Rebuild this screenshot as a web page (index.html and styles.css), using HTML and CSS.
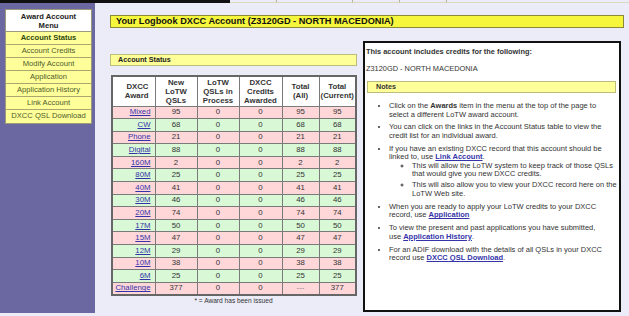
FILE: index.html
```html
<!DOCTYPE html>
<html lang="en">
  <head>
    <meta charset="UTF-8" />
    <meta name="viewport" content="width=device-width, initial-scale=1.0" />
    <title>DXCC Account</title>

    <link rel="stylesheet" href="styles.css">
  </head>
  <body>
    <div class="topbar">
      <div class="topbar-dark"></div>
      <div class="topbar-tab"></div>
      <div class="topbar-tab wide"></div>
      <div class="topbar-tab"></div>
      <div class="topbar-tab"></div>
      <div class="topbar-rest"></div>
    </div>

    <div class="page">
      <div class="sidebar">
        <div class="menu">
          <div class="menu-head">Award Account<br />Menu</div>
          <div class="menu-item current">Account Status</div>
          <div class="menu-item">Account Credits</div>
          <div class="menu-item">Modify Account</div>
          <div class="menu-item">Application</div>
          <div class="menu-item">Application History</div>
          <div class="menu-item">Link Account</div>
          <div class="menu-item">DXCC QSL Download</div>
        </div>
      </div>

      <div class="main">
        <h1 class="title">Your Logbook DXCC Account (Z3120GD - NORTH MACEDONIA)</h1>

        <div class="content">
          <div class="status">
            <div class="bar">Account Status</div>

            <table class="status-table">
              <thead>
                <tr>
                  <th class="award">DXCC<br />Award</th>
                  <th>New<br />LoTW<br />QSLs</th>
                  <th>LoTW<br />QSLs in<br />Process</th>
                  <th>DXCC<br />Credits<br />Awarded</th>
                  <th>Total<br />(All)</th>
                  <th>Total<br />(Current)</th>
                </tr>
              </thead>
              <tbody>
                <tr class="pink"><td class="award"><a href="#">Mixed</a></td><td>95</td><td>0</td><td>0</td><td>95</td><td>95</td></tr>
                <tr class="green"><td class="award"><a href="#">CW</a></td><td>68</td><td>0</td><td>0</td><td>68</td><td>68</td></tr>
                <tr class="pink"><td class="award"><a href="#">Phone</a></td><td>21</td><td>0</td><td>0</td><td>21</td><td>21</td></tr>
                <tr class="green"><td class="award"><a href="#">Digital</a></td><td>88</td><td>0</td><td>0</td><td>88</td><td>88</td></tr>
                <tr class="pink"><td class="award"><a href="#">160M</a></td><td>2</td><td>0</td><td>0</td><td>2</td><td>2</td></tr>
                <tr class="green"><td class="award"><a href="#">80M</a></td><td>25</td><td>0</td><td>0</td><td>25</td><td>25</td></tr>
                <tr class="pink"><td class="award"><a href="#">40M</a></td><td>41</td><td>0</td><td>0</td><td>41</td><td>41</td></tr>
                <tr class="green"><td class="award"><a href="#">30M</a></td><td>46</td><td>0</td><td>0</td><td>46</td><td>46</td></tr>
                <tr class="pink"><td class="award"><a href="#">20M</a></td><td>74</td><td>0</td><td>0</td><td>74</td><td>74</td></tr>
                <tr class="green"><td class="award"><a href="#">17M</a></td><td>50</td><td>0</td><td>0</td><td>50</td><td>50</td></tr>
                <tr class="pink"><td class="award"><a href="#">15M</a></td><td>47</td><td>0</td><td>0</td><td>47</td><td>47</td></tr>
                <tr class="green"><td class="award"><a href="#">12M</a></td><td>29</td><td>0</td><td>0</td><td>29</td><td>29</td></tr>
                <tr class="pink"><td class="award"><a href="#">10M</a></td><td>38</td><td>0</td><td>0</td><td>38</td><td>38</td></tr>
                <tr class="green"><td class="award"><a href="#">6M</a></td><td>25</td><td>0</td><td>0</td><td>25</td><td>25</td></tr>
                <tr class="pink"><td class="award"><a href="#">Challenge</a></td><td>377</td><td>0</td><td>0</td><td class="dash">---</td><td>377</td></tr>
              </tbody>
            </table>
            <p class="footnote">* = Award has been issued</p>
          </div>

          <div class="info">
            <p class="info-head">This account includes credits for the following:</p>
            <p class="info-call">Z3120GD - NORTH MACEDONIA</p>

            <div class="bar">Notes</div>

            <ul class="notes">
              <li>Click on the <b>Awards</b> item in the menu at the top of the page to select a different LoTW award account.</li>
              <li>You can click on the links in the Account Status table to view the credit list for an individual award.</li>
              <li>If you have an existing DXCC record that this account should be linked to, use <a href="#">Link Account</a>.
                <ul>
                  <li>This will allow the LoTW system to keep track of those QSLs that would give you new DXCC credits.</li>
                  <li>This will also allow you to view your DXCC record here on the LoTW Web site.</li>
                </ul>
              </li>
              <li>When you are ready to apply your LoTW credits to your DXCC record, use <a href="#">Application</a></li>
              <li>To view the present and past applications you have submitted, use <a href="#">Application History</a>.</li>
              <li>For an ADIF download with the details of all QSLs in your DXCC record use <a href="#">DXCC QSL Download</a>.</li>
            </ul>
          </div>
        </div>
      </div>
    </div>
  </body>
</html>
```

FILE: styles.css
```css
* {
  margin: 0;
  padding: 0;
  box-sizing: border-box;
}

body {
  font-family: "Liberation Sans", Arial, sans-serif;
  background-color: #ececf9;
  color: #222;
  width: 629px;
  height: 316px;
  overflow: hidden;
}

a {
  color: #3434a8;
}

/* top menu strip, mostly cut off */
.topbar {
  display: flex;
  height: 3px;
}

.topbar-dark {
  width: 230px;
  background-color: #111;
}

.topbar-tab {
  width: 47px;
  border-right: 1px solid #b9b39a;
  border-bottom: 1px solid #ddd8c0;
}

.topbar-tab.wide {
  width: 76px;
}

.topbar-rest {
  flex: 1;
  border-bottom: 1px solid #ddd8c0;
}

.page {
  display: flex;
  height: 310px;
}

/* left menu */
.sidebar {
  width: 95px;
  background-color: #6b67a0;
  padding: 6px 3px 0 5px;
}

.menu {
  border: 1px solid #9d9a7a;
  font-size: 7.6px;
  text-align: center;
}

.menu-head {
  background-color: #fff;
  font-weight: bold;
  color: #222;
  line-height: 9px;
  height: 22px;
  padding-top: 2px;
  border-bottom: 1px solid #9d9a7a;
}

.menu-item {
  background-color: #ffff99;
  color: #4d5a2b;
  height: 13px;
  line-height: 12px;
  border-bottom: 1px solid #a9a66e;
  white-space: nowrap;
}

.menu-item:last-child {
  border-bottom: none;
}

.menu-item.current {
  font-weight: bold;
  color: #2f4a10;
}

/* main column */
.main {
  flex: 1;
  padding: 12px 5px 0 15px;
}

.title {
  background-color: #f6f63c;
  border: 1px solid #8a8a3a;
  font-size: 9.2px;
  line-height: 11px;
  height: 13px;
  padding-left: 5px;
  color: #111;
}

.content {
  display: flex;
  gap: 6px;
  margin-top: 13px;
}

.bar {
  background-color: #ffff99;
  border: 1px solid #bcbc7c;
  font-size: 7.2px;
  font-weight: bold;
  height: 12px;
  line-height: 10px;
  padding-left: 7px;
}

.status {
  width: 247px;
  padding-top: 13px;
}

.status-table {
  margin-top: 9px;
  margin-left: 1px;
  width: 246px;
  border-collapse: collapse;
  border: 2px solid #666;
  font-size: 7.8px;
}

.status-table th,
.status-table td {
  border: 1px solid #7a7a7a;
  text-align: center;
  color: #333;
}

.status-table th {
  background-color: #fff;
  height: 30px;
  line-height: 9px;
  font-weight: bold;
  color: #333;
}

.status-table th:nth-child(1) { width: 43px; }
.status-table th:nth-child(2) { width: 42px; }
.status-table th:nth-child(3) { width: 42px; }
.status-table th:nth-child(4) { width: 43px; }
.status-table th:nth-child(5) { width: 37px; }

.status-table th.award {
  text-align: right;
  padding-right: 6px;
}

.status-table td {
  height: 12.6px;
  line-height: 10px;
}

.status-table td.award {
  text-align: right;
  padding-right: 4px;
}

.status-table td.dash {
  color: #888;
}

.pink {
  background-color: #ffd7d9;
}

.green {
  background-color: #d8f8d6;
}

.footnote {
  text-align: center;
  font-size: 6.6px;
  margin-top: 1px;
  color: #333;
}

/* right info box */
.info {
  width: 258px;
  height: 271px;
  background-color: #fff;
  border: 2px solid #111;
  padding: 4px 3px 0 1px;
  font-size: 7.4px;
  color: #333;
}

.info-head {
  font-weight: bold;
  line-height: 9px;
}

.info-call {
  margin-top: 8px;
  line-height: 9px;
}

.info .bar {
  margin-top: 8px;
  margin-left: 1px;
  padding-left: 8px;
}

.notes {
  margin-top: 9px;
  margin-right: 9px;
  padding-left: 23px;
  font-size: 7.5px;
  line-height: 8.5px;
}

.notes li {
  margin-bottom: 4.4px;
}

.notes a {
  font-weight: bold;
}

.notes ul {
  list-style-type: circle;
  padding-left: 23px;
  margin-right: -11px;
}

.notes ul li {
  margin-bottom: 2.6px;
}
```
